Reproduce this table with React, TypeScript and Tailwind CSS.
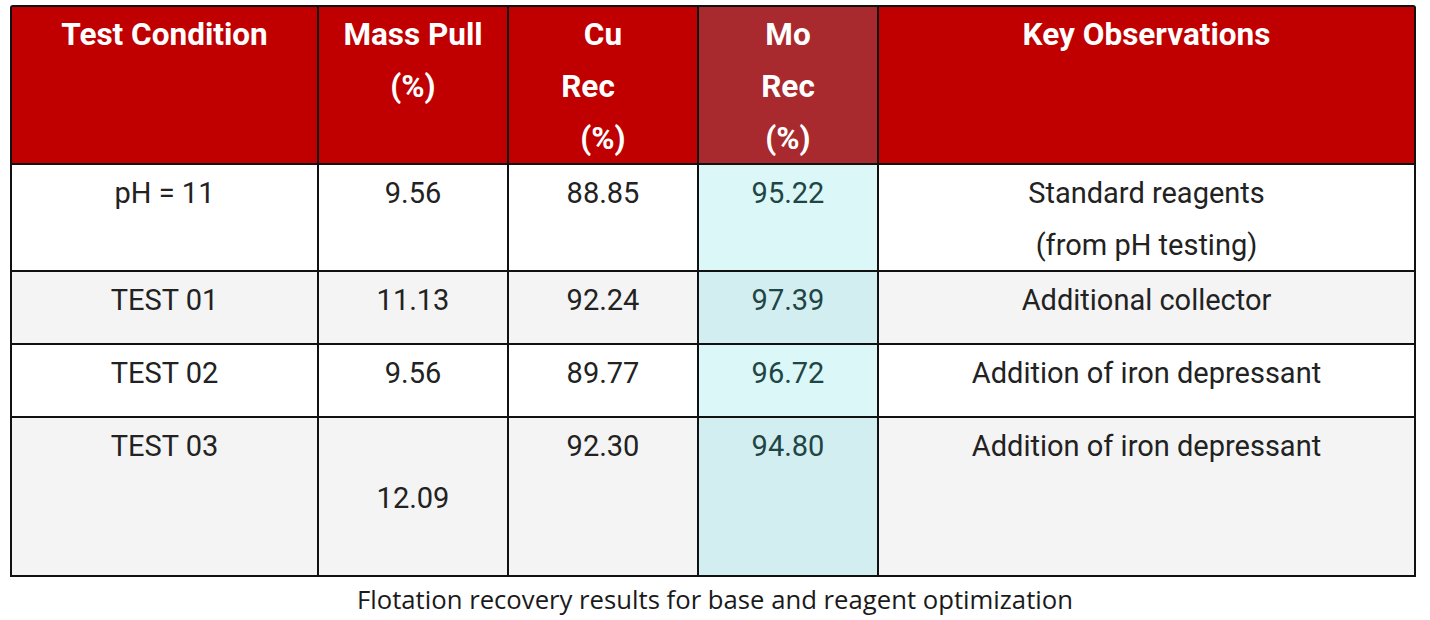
import React from "react";

const HEAD = "bg-[#c00000] text-white font-bold text-[31.5px] leading-[52px] text-center pt-[2px] border-r-2 border-b-2 border-[#111]";
const CELL = "text-[#222] text-[29px] leading-[52px] text-center pt-[2px] border-r-2 border-b-2 border-[#111]";

type Row = { cond: string; mass: string; cu: string; mo: string; obs: string[]; gray: boolean; h: string; massCenter?: boolean };

const rows: Row[] = [
  { cond: "pH = 11", mass: "9.56", cu: "88.85", mo: "95.22", obs: ["Standard reagents", "(from pH testing)"], gray: false, h: "h-[107px]" },
  { cond: "TEST 01", mass: "11.13", cu: "92.24", mo: "97.39", obs: ["Additional collector"], gray: true, h: "h-[73px]" },
  { cond: "TEST 02", mass: "9.56", cu: "89.77", mo: "96.72", obs: ["Addition of iron depressant"], gray: false, h: "h-[73px]" },
  { cond: "TEST 03", mass: "12.09", cu: "92.30", mo: "94.80", obs: ["Addition of iron depressant"], gray: true, h: "h-[159px]", massCenter: true },
];

export default function App() {
  return (
    <div className="w-[1430px] h-[620px] bg-white" style={{ fontFamily: "Roboto, 'Liberation Sans', sans-serif" }}>
      <div className="pl-[10px] pt-[5px]">
        <div className="grid grid-cols-[307px_190px_190px_180px_537px] w-[1406px] border-l-2 border-t-2 border-[#111] rounded-tl-[3px] rounded-tr-[3px]">
          <div className={`${HEAD} h-[158px]`}>Test Condition</div>
          <div className={`${HEAD} h-[158px]`}>
            <div>Mass Pull</div>
            <div>(%)</div>
          </div>
          <div className={`${HEAD} h-[158px]`}>
            <div>Cu</div>
            <div className="pr-[30px]">Rec</div>
            <div>(%)</div>
          </div>
          <div className="bg-[#a82a2e] text-white font-bold text-[31.5px] leading-[52px] text-center pt-[2px] border-r-2 border-b-2 border-[#111] h-[158px]">
            <div>Mo</div>
            <div>Rec</div>
            <div>(%)</div>
          </div>
          <div className={`${HEAD} h-[158px]`}>Key Observations</div>

          {rows.map((r, i) => {
            const bg = r.gray ? "bg-[#f4f4f4]" : "bg-white";
            const moBg = r.gray ? "bg-[#d3eef1]" : "bg-[#dbf7f8]";
            return (
              <React.Fragment key={i}>
                <div className={`${CELL} ${bg} ${r.h}`}>{r.cond}</div>
                {r.massCenter ? (
                  <div className={`${CELL} ${bg} ${r.h} flex items-center justify-center`}>{r.mass}</div>
                ) : (
                  <div className={`${CELL} ${bg} ${r.h}`}>{r.mass}</div>
                )}
                <div className={`${CELL} ${bg} ${r.h}`}>{r.cu}</div>
                <div className={`${CELL} ${moBg} ${r.h} !text-[#1f4545]`}>{r.mo}</div>
                <div className={`${CELL} ${bg} ${r.h}`}>
                  {r.obs.map((o, j) => (
                    <div key={j}>{o}</div>
                  ))}
                </div>
              </React.Fragment>
            );
          })}
        </div>
      </div>
      <div
        className="w-[1430px] text-center text-[25.7px] leading-[32px] text-[#1a1a1a] mt-[7px]"
        style={{ fontFamily: "'Open Sans', 'Noto Sans', sans-serif" }}
      >
        Flotation recovery results for base and reagent optimization
      </div>
    </div>
  );
}
